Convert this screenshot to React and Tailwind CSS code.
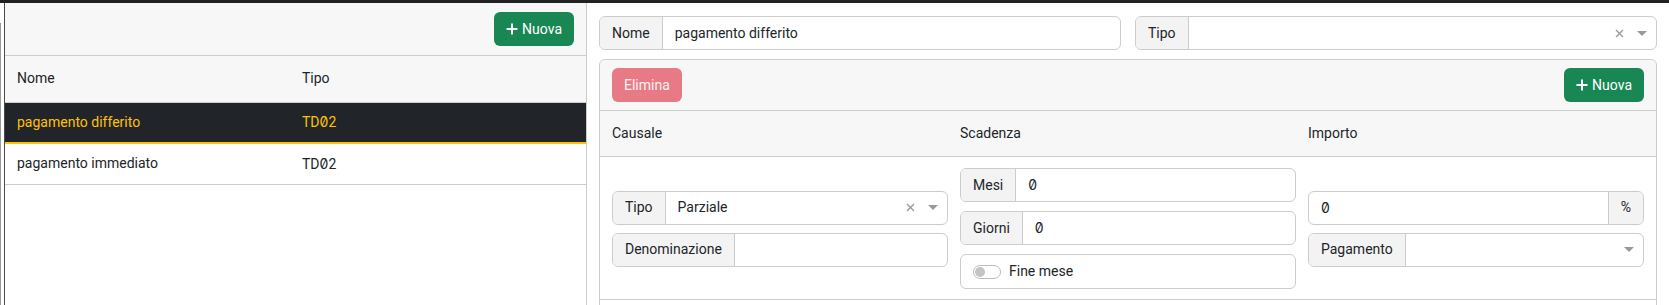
function PlusIcon() {
    return (
        <svg width="12" height="12" viewBox="0 0 12 12" className="shrink-0">
            <path d="M6 0.5v11M0.5 6h11" stroke="white" strokeWidth="2" fill="none" />
        </svg>
    );
}

function Caret() {
    return (
        <svg width="10" height="5" viewBox="0 0 10 5" className="shrink-0">
            <path d="M0 0h10L5 5z" fill="#999" />
        </svg>
    );
}

function Clear() {
    return (
        <svg width="9" height="9" viewBox="0 0 9 9" className="shrink-0">
            <path d="M1 1l7 7M8 1l-7 7" stroke="#9a9a9a" strokeWidth="1.4" fill="none" />
        </svg>
    );
}

// zero barrato come nell'originale
function Zero() {
    return <span className="font-['Inter',sans-serif] slashed-zero">0</span>;
}

function Label({ children, className = "" }) {
    return (
        <span className={"flex items-center px-3 bg-[#f3f3f3] border-r border-[#cccccc] " + className}>
            {children}
        </span>
    );
}

function InputGroup({ label, value, select = false, clear = false, className = "" }) {
    return (
        <div className={"flex h-[34px] border border-[#cccccc] rounded-[6px] overflow-hidden bg-white " + className}>
            <Label>{label}</Label>
            <div className="flex-1 flex items-center pl-3 pr-[9px]">
                <span className="flex-1">{value}</span>
                {clear && <Clear />}
                {select && (
                    <span className="ml-[13px]">
                        <Caret />
                    </span>
                )}
            </div>
        </div>
    );
}

function NuovaButton() {
    return (
        <button className="flex items-center gap-[4px] h-[34px] px-3 rounded-[6px] bg-[#198754] text-white">
            <PlusIcon />
            <span>Nuova</span>
        </button>
    );
}

const tipi = [
    { nome: "pagamento differito", selected: true },
    { nome: "pagamento immediato", selected: false },
];

function ListaTipi() {
    return (
        <table className="w-full table-fixed border-collapse">
            <thead>
                <tr className="h-[46px] bg-[#f7f7f7] border-b border-[#cccccc]">
                    <th className="w-[285px] px-3 text-left font-normal">Nome</th>
                    <th className="px-3 text-left font-normal">Tipo</th>
                </tr>
            </thead>
            <tbody>
                {tipi.map((t) =>
                    t.selected ? (
                        <tr key={t.nome} className="h-[41px] bg-[#212529] text-[#ffc107] border-b-2 border-[#ffc107]">
                            <td className="px-3">{t.nome}</td>
                            <td className="px-3">TD<Zero />2</td>
                        </tr>
                    ) : (
                        <tr key={t.nome} className="h-[41px] bg-white border-b border-[#cccccc]">
                            <td className="px-3">{t.nome}</td>
                            <td className="px-3">TD<Zero />2</td>
                        </tr>
                    )
                )}
            </tbody>
        </table>
    );
}

function Scadenze() {
    return (
        <div className="mt-[9px] border border-[#cccccc] rounded-t-[6px] bg-white h-[400px]">
            <div className="h-[51px] flex items-center justify-between px-3 bg-[#f7f7f7] border-b border-[#cccccc] rounded-t-[6px]">
                <button className="h-[34px] px-3 rounded-[6px] bg-[#e77a84] text-white/90">Elimina</button>
                <NuovaButton />
            </div>
            <div className="h-[46px] grid grid-cols-3 gap-3 px-3 items-center bg-[#f7f7f7] border-b border-[#cccccc]">
                <span>Causale</span>
                <span>Scadenza</span>
                <span>Importo</span>
            </div>
            <div className="grid grid-cols-3 gap-3 px-3 pt-[11px] pb-[10px] border-b border-[#cccccc]">
                <div className="flex flex-col justify-center gap-[8px]">
                    <InputGroup label="Tipo" value="Parziale" select clear />
                    <InputGroup label="Denominazione" value="" />
                </div>
                <div className="flex flex-col gap-[9px]">
                    <InputGroup label="Mesi" value={<Zero />} />
                    <InputGroup label="Giorni" value={<Zero />} />
                    <div className="flex items-center gap-2 h-[35px] px-3 border border-[#cccccc] rounded-[6px]">
                        <span className="w-[28px] h-[14px] rounded-full border border-[#bdbdbd] flex items-center px-[1px]">
                            <span className="w-[10px] h-[10px] rounded-full bg-[#c4c4c4]" />
                        </span>
                        <span>Fine mese</span>
                    </div>
                </div>
                <div className="flex flex-col justify-center gap-[8px]">
                    <div className="flex h-[34px] border border-[#cccccc] rounded-[6px] overflow-hidden bg-white">
                        <div className="flex-1 flex items-center px-3"><Zero /></div>
                        <span className="flex items-center px-3 bg-[#f3f3f3] border-l border-[#cccccc]">%</span>
                    </div>
                    <InputGroup label="Pagamento" value="" select />
                </div>
            </div>
        </div>
    );
}

export default function App() {
    return (
        <div className="w-[1669px] h-[305px] overflow-hidden bg-white text-[14px] text-[#212529] font-['Roboto','Liberation_Sans',sans-serif]">
            <div className="h-[3px] bg-[#222222]" />
            <div className="flex h-[302px]">
                <div className="w-[5px] flex border-r border-[#4a4a4a]">
                    <div className="w-[1px] mt-[20px] bg-[#9a9a9a]" />
                </div>
                <div className="w-[582px] flex flex-col border-r border-[#cccccc] bg-white">
                    <div className="h-[53px] shrink-0 flex items-center justify-end pr-3 bg-[#f7f7f7] border-b border-[#cccccc]">
                        <NuovaButton />
                    </div>
                    <ListaTipi />
                </div>
                <div className="flex-1 px-3 pt-[13px]">
                    <div className="grid grid-cols-2 gap-[14px]">
                        <InputGroup label="Nome" value="pagamento differito" />
                        <InputGroup label="Tipo" value="" select clear />
                    </div>
                    <Scadenze />
                </div>
            </div>
        </div>
    );
}
